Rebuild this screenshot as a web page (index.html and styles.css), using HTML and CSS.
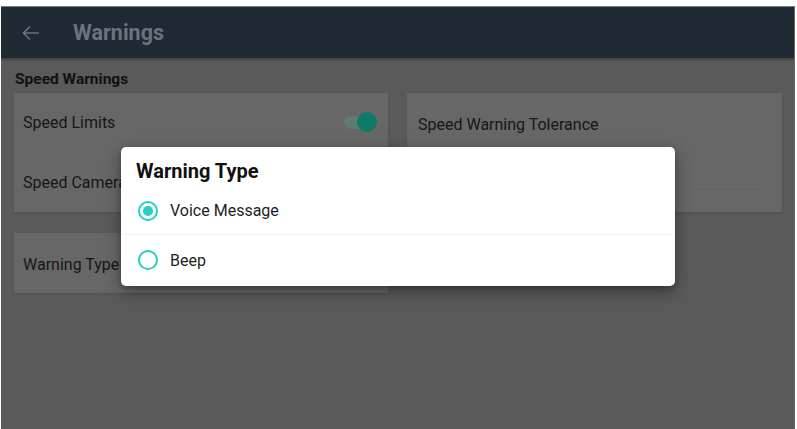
FILE: index.html
```html
<!DOCTYPE html>
<html lang="en">
<head>
    <meta charset="UTF-8" />
    <meta name="viewport" content="width=device-width, initial-scale=1.0" />
    <title>Warnings</title>
    <link rel="stylesheet" href="styles.css">
</head>
<body>
    <div class="screen">

        <!-- Toolbar -->
        <header class="toolbar">
            <button class="back" aria-label="Back">
                <svg width="18" height="16" viewBox="0 0 18 16">
                    <path d="M17 8H2M8 1.5L1.5 8L8 14.5" fill="none" stroke="currentColor" stroke-width="1.6" />
                </svg>
            </button>
            <h1>Warnings</h1>
        </header>

        <main class="content">
            <h2 class="section-title">Speed Warnings</h2>

            <div class="settings-grid">
                <div class="card">
                    <div class="row">
                        <span>Speed Limits</span>
                        <span class="switch on"><span class="thumb"></span></span>
                    </div>
                    <div class="row">
                        <span>Speed Cameras</span>
                    </div>
                </div>

                <div class="card">
                    <div class="row top">
                        <span>Speed Warning Tolerance</span>
                    </div>
                    <div class="row">
                        <span class="slider"></span>
                    </div>
                </div>

                <div class="card single">
                    <div class="row">
                        <span>Warning Type</span>
                    </div>
                </div>
            </div>
        </main>

        <!-- Dialog -->
        <div class="dialog">
            <h3>Warning Type</h3>
            <label class="option">
                <span class="radio checked"></span>
                <span>Voice Message</span>
            </label>
            <label class="option">
                <span class="radio"></span>
                <span>Beep</span>
            </label>
        </div>
    </div>
</body>
</html>
```

FILE: styles.css
```css
:root {
    --page: #ffffff;
    --screen-bg: #5a5a5a;
    --card: #676767;
    --toolbar: #1f2933;
    --toolbar-text: #6b737d;
    --text: #161616;
    --accent: #25d0c3;
}

body {
    margin: 0;
    background-color: var(--page);
    font-family: Roboto, 'Noto Sans', sans-serif;
}

.screen {
    position: relative;
    margin: 6px 0 0 1px;
    width: 793px;
    height: 423px;
    background-color: var(--screen-bg);
    border-top: 1px solid #777a80;
    border-right: 1px solid #6a6a6a;
    overflow: hidden;
}

.toolbar {
    display: flex;
    align-items: center;
    height: 51px;
    background-color: var(--toolbar);
    box-shadow: 0 2px 2px rgba(0, 0, 0, 0.25);
}

.back {
    display: flex;
    align-items: center;
    justify-content: center;
    margin-left: 20px;
    padding: 0;
    width: 20px;
    height: 20px;
    background: none;
    border: none;
    color: var(--toolbar-text);
}

.toolbar h1 {
    margin: 0 0 0 32px;
    font-size: 21.5px;
    font-weight: 700;
    color: var(--toolbar-text);
}

.content {
    padding: 12px 12px 0 13px;
}

.section-title {
    margin: 0 0 5px 1px;
    font-size: 15.5px;
    line-height: 18px;
    font-weight: 700;
    color: #111;
}

.settings-grid {
    display: grid;
    grid-template-columns: 374px 375px;
    column-gap: 19px;
    row-gap: 21px;
    align-items: start;
}

.card {
    background-color: var(--card);
    box-shadow: 0 1px 2px rgba(0, 0, 0, 0.12);
}

.row {
    display: flex;
    align-items: center;
    justify-content: space-between;
    height: 60px;
    padding: 0 11px 0 9px;
    font-size: 16px;
    color: var(--text);
}

.row:first-child {
    height: 59px;
}

.card.single .row {
    padding-top: 2px;
    height: 58px;
}

.row.top {
    padding-left: 11px;
    padding-top: 3px;
    height: 56px;
}

.switch {
    position: relative;
    width: 32px;
    height: 13px;
    margin-right: 1px;
    border-radius: 7px;
    background-color: #5e7a73;
}

.thumb {
    position: absolute;
    right: -1px;
    top: -4px;
    width: 20px;
    height: 20px;
    border-radius: 50%;
    background-color: #0c7a67;
}

.slider {
    display: block;
    margin: 8px 10px 0 auto;
    width: 70px;
    height: 1px;
    background-color: #6d6d6d;
}

/* dialog over the dimmed screen */
.dialog {
    position: absolute;
    left: 120px;
    top: 140px;
    width: 554px;
    height: 139px;
    background-color: #fff;
    border-radius: 5px;
    box-shadow: 0 6px 18px rgba(0, 0, 0, 0.35), 0 2px 5px rgba(0, 0, 0, 0.2);
}

.dialog h3 {
    margin: 0;
    padding: 12px 0 4px 15px;
    font-size: 20px;
    line-height: 24px;
    font-weight: 700;
    color: #111;
}

.option {
    display: flex;
    align-items: center;
    gap: 12px;
    height: 47px;
    padding-left: 17px;
    font-size: 16px;
    color: #1e1e1e;
}

.option + .option {
    border-top: 1px solid #efefef;
    margin-right: 3px;
    height: 50px;
}

.radio {
    box-sizing: border-box;
    width: 20px;
    height: 20px;
    border: 2px solid var(--accent);
    border-radius: 50%;
    display: flex;
    align-items: center;
    justify-content: center;
}

.radio.checked::after {
    content: "";
    width: 10px;
    height: 10px;
    border-radius: 50%;
    background-color: var(--accent);
}
```
